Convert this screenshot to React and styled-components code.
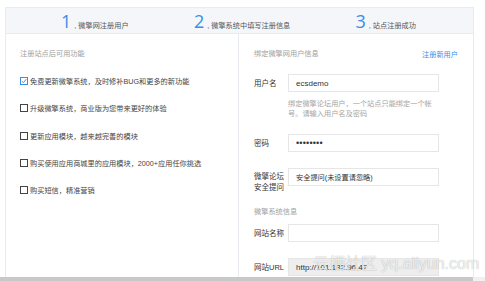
import React from 'react'
import styled, { createGlobalStyle } from 'styled-components'

const GlobalStyle = createGlobalStyle`
  html, body {
    margin: 0;
    padding: 0;
    background: #fff;
  }
  body {
    font-family: "Liberation Sans", "Noto Sans CJK SC", sans-serif;
    color: #333;
  }
`

const Page = styled.div`
  position: relative;
  width: 485px;
  height: 281px;
  overflow: hidden;
  display: flex;
  flex-direction: column;
`

const Frame = styled.div`
  flex: 1;
  min-height: 0;
  padding: 7px 0 0 5px;
  display: flex;
`

const Card = styled.div`
  width: 467px;
  border: 1px solid #e8ebf0;
  border-bottom: none;
  display: flex;
  flex-direction: column;
`

const StepBar = styled.div`
  height: 25px;
  background: #f4f6fa;
  border-bottom: 1px solid #e8ebf0;
  display: flex;
  align-items: center;
  justify-content: space-between;
  padding: 0 57px 0 55px;
`

const Step = styled.div`
  display: flex;
  align-items: baseline;
  white-space: nowrap;
`

const StepNum = styled.span`
  font-size: 18px;
  line-height: 18px;
  color: #3a8ee6;
  font-family: "Open Sans", "Liberation Sans", sans-serif;
  margin-right: 3px;
`

const StepText = styled.span`
  font-size: 7.2px;
  color: #555;
`

const Body = styled.div`
  flex: 1;
  display: grid;
  grid-template-columns: 233px 234px;
`

const LeftPane = styled.div`
  border-right: 1px solid #e8ebf0;
  padding: 15px 0 0 14px;
`

const RightPane = styled.div`
  padding: 15px 15px 0 15px;
  display: flex;
  flex-direction: column;
`

const SectionTitle = styled.div`
  font-size: 7.2px;
  line-height: 10px;
  color: #a0a0a0;
  margin-top: ${({ mt }) => mt || 0}px;
`

const CheckList = styled.div`
  margin-top: 17px;
  display: flex;
  flex-direction: column;
  gap: 17.3px;
`

const CheckRow = styled.label`
  display: flex;
  align-items: center;
  height: 10px;
  font-size: 7.2px;
  color: #444;
  white-space: nowrap;
`

const Box = styled.span`
  width: 6px;
  height: 6px;
  border: 1px solid ${({ checked }) => (checked ? '#3a8ee6' : '#444')};
  margin-right: 2px;
  display: flex;
  align-items: center;
  justify-content: center;
  background: #fff;
`

const HeadRow = styled.div`
  display: flex;
  justify-content: space-between;
  align-items: center;
  height: 10px;
`

const Link = styled.a`
  font-size: 7.2px;
  color: #3a8ee6;
  text-decoration: none;
`

const FormRow = styled.div`
  display: flex;
  align-items: ${({ top }) => (top ? 'flex-start' : 'center')};
  margin-top: ${({ mt }) => mt || 0}px;
`

const Label = styled.div`
  width: 34px;
  flex-shrink: 0;
  font-size: 7.5px;
  line-height: 11px;
  color: #333;
  white-space: nowrap;
  padding-top: ${({ pt }) => pt || 0}px;
`

const Field = styled.div`
  box-sizing: border-box;
  width: 151px;
  height: 18px;
  border: 1px solid #e6e6e6;
  background: ${({ disabled }) => (disabled ? '#eeeeee' : '#fff')};
  display: flex;
  align-items: center;
  padding-left: 7px;
  font-size: ${({ size }) => size || 8}px;
  color: #333;
  white-space: nowrap;
`

const Dots = styled.span`
  font-size: 9px;
  letter-spacing: 0.2px;
  color: #333;
`

const Hint = styled.div`
  margin: 7px 0 0 34px;
  width: 146px;
  font-size: 7.2px;
  line-height: 10px;
  color: #a5a5a5;
`

const ScrollBar = styled.div`
  height: 4px;
  display: flex;
  background: #f0f0f0;
`

const Thumb = styled.div`
  width: 473px;
  background: #c8c8c8;
`

const Watermark = styled.div`
  position: absolute;
  left: 313px;
  top: 255px;
  font-size: 16px;
  line-height: 17px;
  white-space: nowrap;
  color: rgba(255, 255, 255, 0.8);
  text-shadow: 0 0 1px rgba(0, 0, 0, 0.35);
  pointer-events: none;
`

const steps = [
  ['1', ', 微擎网注册用户'],
  ['2', ', 微擎系统中填写注册信息'],
  ['3', ', 站点注册成功'],
]

const features = [
  ['免费更新微擎系统，及时修补BUG和更多的新功能', true],
  ['升级微擎系统，商业版为您带来更好的体验', false],
  ['更新应用模块，越来越完善的模块', false],
  ['购买使用应用商城里的应用模块，2000+应用任你挑选', false],
  ['购买短信，精准营销', false],
]

const Check = () => (
  <svg width="6" height="6" viewBox="0 0 6 6">
    <path d="M0.8 3.1 L2.4 4.6 L5.3 1.2" fill="none" stroke="#3a8ee6" strokeWidth="1" />
  </svg>
)

const App = () => (
  <Page>
    <GlobalStyle />
    <Frame>
      <Card>
        <StepBar>
          {steps.map(([n, t]) => (
            <Step key={n}>
              <StepNum>{n}</StepNum>
              <StepText>{t}</StepText>
            </Step>
          ))}
        </StepBar>
        <Body>
          <LeftPane>
            <SectionTitle>注册站点后可用功能</SectionTitle>
            <CheckList>
              {features.map(([text, on]) => (
                <CheckRow key={text}>
                  <Box checked={on}>{on && <Check />}</Box>
                  {text}
                </CheckRow>
              ))}
            </CheckList>
          </LeftPane>
          <RightPane>
            <HeadRow>
              <SectionTitle>绑定微擎网用户信息</SectionTitle>
              <Link href="#">注册新用户</Link>
            </HeadRow>
            <FormRow mt={15}>
              <Label>用户名</Label>
              <Field>ecsdemo</Field>
            </FormRow>
            <Hint>绑定微擎论坛用户，一个站点只能绑定一个帐号。请输入用户名及密码</Hint>
            <FormRow mt={15}>
              <Label>密码</Label>
              <Field>
                <Dots>••••••••</Dots>
              </Field>
            </FormRow>
            <FormRow mt={16} top>
              <Label pt={3}>
                微擎论坛
                <br />
                安全提问
              </Label>
              <Field size={7.2}>安全提问(未设置请忽略)</Field>
            </FormRow>
            <SectionTitle mt={14}>微擎系统信息</SectionTitle>
            <FormRow mt={7}>
              <Label>网站名称</Label>
              <Field />
            </FormRow>
            <FormRow mt={16}>
              <Label>网站URL</Label>
              <Field disabled>http://101.132.96.47</Field>
            </FormRow>
          </RightPane>
        </Body>
      </Card>
    </Frame>
    <ScrollBar>
      <Thumb />
    </ScrollBar>
    <Watermark>云栖社区 yq.aliyun.com</Watermark>
  </Page>
)

export default App
